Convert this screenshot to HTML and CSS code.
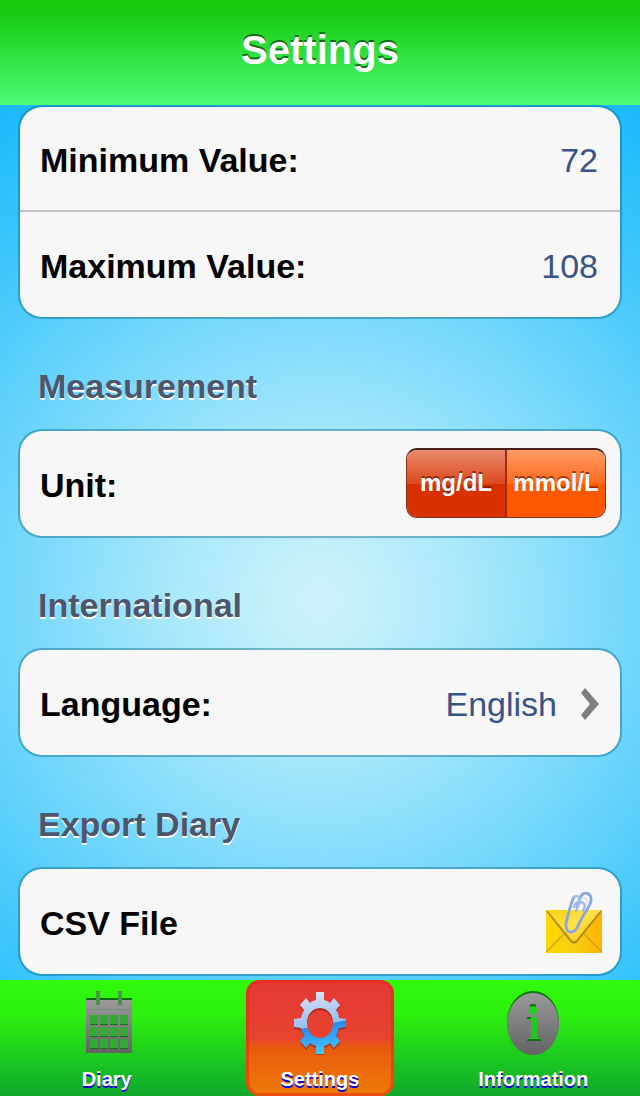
FILE: index.html
```
<!DOCTYPE html>
<html lang="en">
<head>
<meta charset="utf-8">
<meta name="viewport" content="width=device-width, initial-scale=1">
<title>Settings</title>
<link rel="stylesheet" href="styles.css">
</head>
<body>
<header class="header"><h1 class="title">Settings</h1></header>
<main class="content">
  <section class="card">
    <div class="row">
      <label class="label" for="min">Minimum Value:</label>
      <input class="value" id="min" type="text" inputmode="numeric" value="72">
    </div>
    <div class="row">
      <label class="label" for="max">Maximum Value:</label>
      <input class="value" id="max" type="text" inputmode="numeric" value="108">
    </div>
  </section>
  <h2 class="heading">Measurement</h2>
  <section class="card">
    <div class="row">
      <span class="label" id="unit">Unit:</span>
      <div class="segments" role="group" aria-labelledby="unit">
        <button class="segment segment-on" type="button" aria-pressed="true">mg/dL</button>
        <button class="segment" type="button" aria-pressed="false">mmol/L</button>
      </div>
    </div>
  </section>
  <h2 class="heading">International</h2>
  <section class="card">
    <button class="row row-button" type="button">
      <span class="label">Language:</span>
      <span class="choice">English</span>
      <svg class="chevron" viewBox="0 0 18 32" aria-hidden="true"><path d="M0 5L4 0L18 16L4 32L0 27L9 16Z" fill="#7f7f7f"/></svg>
    </button>
  </section>
  <h2 class="heading">Export Diary</h2>
  <section class="card">
    <button class="row row-button" type="button">
      <span class="label">CSV File</span>
      <svg class="mail" viewBox="0 0 56 62" aria-hidden="true">
        <defs>
          <linearGradient id="env" x1="0" y1="0" x2="1" y2="0"><stop offset="0" stop-color="#ffd800"/><stop offset=".5" stop-color="#f8cf13"/><stop offset="1" stop-color="#ffb300"/></linearGradient>
          <linearGradient id="flap" x1="0" y1="0" x2="1" y2="1"><stop offset="0" stop-color="#ffcf08"/><stop offset=".45" stop-color="#ffe24a"/><stop offset="1" stop-color="#ffc61a"/></linearGradient>
        </defs>
        <path d="M0 18H56V61H0Z" fill="url(#env)"/>
        <path d="M0 60L19 41M56 60L37 41" stroke="#d3a116" stroke-width="1.5"/>
        <path d="M1 19L25 49Q28 52 31 49L55 19" fill="none" stroke="#b08a1c" stroke-width="2"/>
        <path d="M1 18L25 46Q28 49 31 46L55 18Z" fill="url(#flap)"/>
        <path d="M28 5C25 10 22 23 20 31C19 43 29 42 32 34C35 26 41 19 44 12C47 4 43 1 39 1C34 2 34 8 31 15" fill="none" stroke="#8ba6dc" stroke-width="2.800" stroke-linecap="round"/>
        <path d="M28 5C33 2 35 7 33 12L30 19M28 15C29 9 37 8 39 14L37 19" fill="none" stroke="#a5b9e4" stroke-width="2.400" stroke-linecap="round"/>
        <path d="M37 8C38 4 43 7 40 12" fill="none" stroke="#dbe3f5" stroke-width="2"/>
      </svg>
    </button>
  </section>
</main>
<nav class="tabs">
  <a class="tab" href="#diary">
    <svg class="icon" viewBox="0 0 54 64" aria-hidden="true">
      <defs><linearGradient id="metal" x1="0" y1="0" x2="0" y2="1"><stop offset="0" stop-color="#9a9a9a"/><stop offset="1" stop-color="#626262"/></linearGradient></defs>
      <path d="M6 7H52V10H6Z" fill="#0b6d08"/>
      <path d="M6 9H52V62H6Z" fill="url(#metal)"/>
      <path fill="#34a934" d="M10 24H18V34H10ZM20 24H28V34H20ZM30 24H38V34H30ZM40 24H48V34H40ZM10 36H18V46H10ZM20 36H28V46H20ZM30 36H38V46H30ZM40 36H48V46H40ZM10 48H18V58H10ZM20 48H28V58H20ZM30 48H38V58H30ZM40 48H48V58H40Z"/>
      <path d="M6 18.500H52" stroke="#74907a" stroke-width="1"/>
      <path d="M10 33.500H18M20 33.500H28M30 33.500H38M40 33.500H48M10 45.500H18M20 45.500H28M30 45.500H38M40 45.500H48M10 57.500H18M20 57.500H28M30 57.500H38M40 57.500H48" stroke="#156d15" stroke-width="1"/>
      <path d="M16 0H20V14H16ZM38 0H42V14H38Z" fill="#479647"/>
    </svg>
    <span class="tab-label">Diary</span>
  </a>
  <a class="tab tab-on" href="#settings" aria-current="page">
    <svg class="icon" viewBox="0 0 54 64" aria-hidden="true">
      <defs>
        <linearGradient id="gear" x1=".42" y1="0" x2=".58" y2="1"><stop offset="0" stop-color="#d8e2f7"/><stop offset=".53" stop-color="#98bdec"/><stop offset=".54" stop-color="#258cf0"/><stop offset="1" stop-color="#48c8ff"/></linearGradient>
        <path id="cog" fill-rule="evenodd" d="M23 1H31V9Q35 10 37 12L41 7L47 14L43 19Q46 23 46 27L53 28V36L46 37Q45 41 43 45L47 50L41 57L37 52Q35 54 31 55V63H23V55Q19 54 17 52L13 57L7 50L11 45Q9 41 8 37L1 36V28L8 27Q9 23 11 19L7 14L13 7L17 12Q19 10 23 9ZM27 17C20 17 14 23 14 32S20 47 27 47S40 41 40 32S34 17 27 17Z"/>
      </defs>
      <use href="#cog" transform="translate(0 2)" fill="#7b2412" opacity=".6"/>
      <use href="#cog" fill="url(#gear)"/>
    </svg>
    <span class="tab-label">Settings</span>
  </a>
  <a class="tab" href="#information">
    <svg class="icon" viewBox="0 0 54 64" aria-hidden="true">
      <ellipse cx="27" cy="31" rx="26" ry="31" fill="#12700f"/>
      <ellipse cx="27" cy="33" rx="26" ry="31" fill="url(#metal)"/>
      <ellipse cx="27" cy="19" rx="4" ry="5" fill="#22cf19"/>
      <path d="M21 26H31V47H35V50H21V47H25V29H21Z" fill="#22c91d"/>
      <path d="M21 27H25M21 49H35M24 15Q27 13 30 15" fill="none" stroke="#126d10" stroke-width="2"/>
    </svg>
    <span class="tab-label">Information</span>
  </a>
</nav>
</body>
</html>
```
FILE: styles.css
```
* { box-sizing: border-box; }

body {
  margin: 0;
  min-height: 100vh;
  display: flex;
  flex-direction: column;
  font-family: "Liberation Sans", Arial, sans-serif;
  background: radial-gradient(circle at 50% 600px, #cff3fa 0, #a6e7fb 160px, #70d6fb 320px, #38c4fb 480px, #16b8fd 600px);
}

button, input { font: inherit; border: 0; background: none; padding: 0; }

.header {
  height: 105px;
  display: flex;
  align-items: center;
  justify-content: center;
  background: linear-gradient(#18ca10 0, #19cc13 15px, #4dfb78 100%);
}

.title {
  margin: 0;
  padding-bottom: 6px;
  font-size: 40px;
  line-height: 56px;
  color: #fff;
  text-shadow: 0 -2px 0 #116b18;
}

.content { flex: 1; padding: 0 18px 4px; }

.card {
  border: 2px solid rgba(0, 95, 130, 0.4);
  border-radius: 24px;
  background: #f7f7f7;
  background-clip: padding-box;
  overflow: hidden;
}

.row {
  width: 100%;
  min-height: 105px;
  padding: 2px 22px 0 20px;
  display: flex;
  align-items: center;
  justify-content: space-between;
  font-size: 34px;
  line-height: 46px;
}

.row:not(:last-child) { min-height: 103px; }

.row + .row {
  min-height: 107px;
  border-top: 2px solid #c3c3c3;
}

.row-button { padding-right: 18px; text-align: left; }

.label { font-weight: bold; color: #000; }

.value {
  width: 160px;
  text-align: right;
  color: #385487;
}

.choice {
  margin-left: auto;
  margin-right: 24px;
  color: #385487;
}

.chevron { width: 18px; height: 32px; margin-right: 3px; }

.mail { width: 56px; height: 62px; }

.heading {
  margin: 0;
  padding: 44px 20px 20px;
  font-size: 34px;
  line-height: 46px;
  color: #4c566c;
  text-shadow: 0 2px 0 #fff;
}

.segments {
  display: flex;
  width: 200px;
  height: 70px;
  margin-right: -8px;
  margin-bottom: 3px;
  border: 1px solid #8c3212;
  border-top: 2px solid #48221a;
  border-radius: 11px;
  overflow: hidden;
}

.segment {
  flex: 1;
  min-width: 0;
  padding-bottom: 2px;
  font-size: 24px;
  font-weight: bold;
  color: #fff;
  text-shadow: 0 -2px 0 rgba(80, 15, 0, 0.6);
  background: linear-gradient(#ff9c67 0, #ff6a1e 50%, #ff5800 51%, #ff5800 100%);
}

.segment-on {
  border-right: 2px solid #a42b0b;
  background: linear-gradient(#e98a6c 0, #dc4a20 50%, #d93000 51%, #d93000 100%);
}

.tabs {
  height: 116px;
  display: grid;
  grid-template-columns: repeat(3, 1fr);
  justify-items: center;
  background: linear-gradient(#31fa0c 0, #2cf00e 30%, #0fa82d 100%);
}

.tab {
  width: 148px;
  display: flex;
  flex-direction: column;
  align-items: center;
  padding-top: 11px;
  gap: 10px;
  text-decoration: none;
  border-radius: 14px;
}

.tab-on {
  background: linear-gradient(#e43737 0, #e8432f 50%, #e95a10 58%, #ee7c07 100%);
  box-shadow: inset 0 0 0 3px rgba(235, 35, 15, 0.5);
}

.icon { width: 54px; height: 64px; }

.tab-label {
  font-size: 20px;
  line-height: 28px;
  font-weight: bold;
  color: #fff;
  text-shadow: 0 2px 0 #0500dc;
}
```
